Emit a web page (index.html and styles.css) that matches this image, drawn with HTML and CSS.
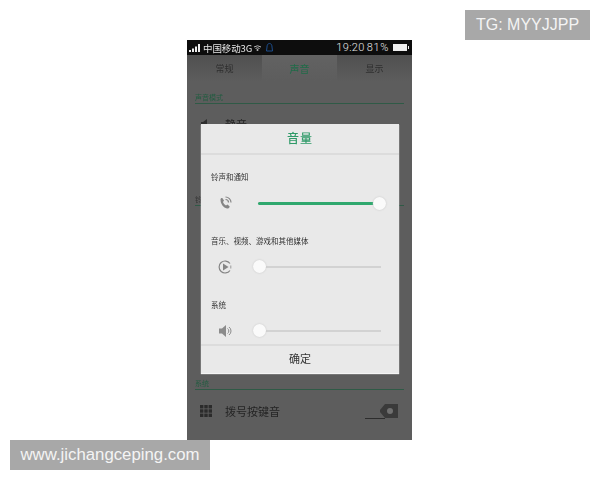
FILE: index.html
```html
<!DOCTYPE html>
<html lang="zh">
<head>
<meta charset="utf-8">
<title>音量</title>
<link rel="stylesheet" href="styles.css">
</head>
<body>
<div class="phone">
  <div class="status">
    <svg class="signal" width="12" height="8" viewBox="0 0 12 8"><rect x="0" y="6" width="2" height="2" fill="#eee"/><rect x="3" y="4.500" width="2" height="3.500" fill="#eee"/><rect x="6" y="2.500" width="2" height="5.500" fill="#eee"/><rect x="9" y="0" width="2" height="8" fill="#eee"/></svg>
    <span class="carrier">中国移动3G</span>
    <svg class="wifi" width="7" height="6" viewBox="0 0 7 6"><path d="M0 2 Q3.500 -0.500 7 2 M1.500 3.500 Q3.500 2 5.500 3.500" stroke="#bbb" stroke-width="1" fill="none"/><circle cx="3.500" cy="5" r="1" fill="#bbb"/></svg>
    <svg class="qq" width="7" height="9" viewBox="0 0 7 9"><path d="M3.500 .5C1.500 .5 1 2.500 1 4L.5 8H6.500L6 4C6 2.500 5.500 .5 3.500 .5Z" stroke="#1d4f8f" fill="none"/></svg>
    <span class="clock">19:20</span>
    <span class="percent">81%</span>
    <span class="battery"><span class="battery-cap"></span></span>
  </div>
  <div class="tabs">
    <div class="tab">常规</div>
    <div class="tab tab-active">声音</div>
    <div class="tab">显示</div>
  </div>
  <div class="content">
    <div class="section-title">声音模式</div>
    <div class="row row-mode">
      <svg class="row-icon" width="12" height="12" viewBox="0 0 12 12"><path d="M1 4H3L7 1V11L3 8H1Z" fill="#2e2e2e"/></svg>
      <span class="row-label">静音</span>
    </div>
    <div class="section-title section-mid">铃声</div>
    <div class="spacer"></div>
    <div class="section-title">系统</div>
    <div class="row row-dial">
      <svg class="row-icon" width="12" height="12" viewBox="0 0 12 12">
        <g fill="#2b2b2b"><rect width="3.400" height="3.400"/><rect x="4.300" width="3.400" height="3.400"/><rect x="8.600" width="3.400" height="3.400"/><rect y="4.300" width="3.400" height="3.400"/><rect x="4.300" y="4.300" width="3.400" height="3.400"/><rect x="8.600" y="4.300" width="3.400" height="3.400"/><rect y="8.600" width="3.400" height="3.400"/><rect x="4.300" y="8.600" width="3.400" height="3.400"/><rect x="8.600" y="8.600" width="3.400" height="3.400"/></g>
      </svg>
      <span class="row-label">拨号按键音</span>
      <svg class="toggle" width="33" height="16" viewBox="0 0 33 16"><path d="M0 15.500H20" stroke="#2d2d2d"/><path d="M15 7L20 1H33V15H20L15 9Z" fill="#3a3a3a"/><circle cx="25" cy="8" r="3" fill="#707070"/></svg>
    </div>
  </div>

  <div class="dialog">
    <div class="dialog-title">音量</div>
    <div class="volume-list">
      <div class="volume">
        <div class="volume-label">铃声和通知</div>
        <div class="volume-row">
          <svg class="volume-icon" width="14" height="14" viewBox="0 0 14 14"><path d="M2.500 3.500C2.500 2.300 3.800 1.700 4.500 2.300L6 4.500L5 6C5.500 7.500 6.500 8.800 8 9.500L9.500 8.500L11.700 10.500C11.700 11.700 10 12.800 9 12.500C5.500 11.700 2.500 8 2.500 3.500Z" fill="#858585"/><path d="M7.500 1A5.500 5.500 0 0 1 13 6.500M7.500 3.500A3 3 0 0 1 10.500 6.500" stroke="#858585" stroke-width="1.200" fill="none"/></svg>
          <div class="slider"><div class="slider-fill"></div><div class="thumb"></div></div>
        </div>
      </div>
      <div class="volume">
        <div class="volume-label">音乐、视频、游戏和其他媒体</div>
        <div class="volume-row">
          <svg class="volume-icon" width="14" height="14" viewBox="0 0 14 14"><path d="M12 3.500A6 6 0 1 0 12 10.500" stroke="#858585" stroke-width="1.200" fill="none"/><path d="M5 3.500L10.500 7L5 10.500Z" fill="#858585"/><path d="M12.800 5.500V8.500" stroke="#999"/></svg>
          <div class="slider"><div class="thumb thumb-start"></div></div>
        </div>
      </div>
      <div class="volume">
        <div class="volume-label">系统</div>
        <div class="volume-row">
          <svg class="volume-icon" width="14" height="14" viewBox="0 0 14 14"><path d="M1 4.500H4L8 1V13L4 9.500H1Z" fill="#8b8b8b"/><path d="M9.500 4.500A3 3 0 0 1 9.500 9.500M11 3A5 5 0 0 1 11 11" stroke="#8b8b8b" fill="none"/></svg>
          <div class="slider"><div class="thumb thumb-start"></div></div>
        </div>
      </div>
    </div>
    <div class="dialog-ok">确定</div>
  </div>
</div>
<div class="mark mark-tg">TG: MYYJJPP</div>
<div class="mark mark-site">www.jichangceping.com</div>
</body>
</html>
```
FILE: styles.css
```css
* { box-sizing: border-box; }
html, body { margin: 0; padding: 0; }
body {
  width: 600px;
  height: 480px;
  background: #fff;
  overflow: hidden;
  position: relative;
  font-family: "Noto Sans CJK SC", "Liberation Sans", sans-serif;
}
.phone {
  position: relative;
  width: 225px;
  height: 400px;
  margin: 40px 0 0 187px;
  background: #5d5d5d;
  display: flex;
  flex-direction: column;
}
.status {
  height: 15px;
  background: #0d0d0d;
  color: #e6e6e6;
  display: flex;
  align-items: center;
  padding: 0 5px 0 2px;
  white-space: nowrap;
}
.signal { margin-right: 2px; }
.carrier { font-size: 9.500px; width: 50px; letter-spacing: -0.1px; filter: blur(.3px); }
.wifi { margin-left: 1px; }
.qq { margin-left: 5px; }
.clock { margin-left: auto; font-family: Roboto, sans-serif; font-weight: 300; font-size: 11px; letter-spacing: .4px; }
.percent { margin-left: 2px; font-family: Roboto, sans-serif; font-weight: 300; font-size: 11px; letter-spacing: .6px; }
.battery {
  margin-left: 4px;
  width: 14px;
  height: 7px;
  background: #eee;
  position: relative;
}
.battery-cap {
  position: absolute;
  right: -2px;
  top: 2px;
  width: 1px;
  height: 3px;
  background: #eee;
}
.tabs {
  height: 26px;
  display: grid;
  grid-template-columns: 75px 75px 75px;
  background: linear-gradient(#505050, #5d5d5d);
  font-size: 9px;
  color: #2f2f2f;
}
.tab { display: flex; align-items: center; justify-content: center; filter: blur(.4px); }
.tab-active { background: linear-gradient(#626262, #5d5d5d); color: #1f6b48; font-size: 10px; }
.content {
  flex: 1;
  padding: 10px 8px 0;
  display: flex;
  flex-direction: column;
  color: #272727;
}
.section-title {
  font-size: 7px;
  line-height: 12px;
  height: 13px;
  flex: none;
  color: #235c41;
  border-bottom: 1px solid #2f5a46;
  filter: blur(.3px);
}
.row { display: flex; align-items: center; flex: none; }
.row-mode { height: 40px; padding-left: 5px; margin-bottom: 49px; }
.section-mid { color: #333; }
.spacer { height: 171px; flex: none; }
.row-dial { height: 42px; padding-left: 5px; }
.row-icon { margin-right: 13px; flex: none; filter: blur(.4px); }
.row-label { font-size: 11px; color: #242424; filter: blur(.4px); }
.toggle { margin-left: auto; margin-right: 6px; flex: none; filter: blur(.3px); }
.dialog {
  position: absolute;
  left: 14px;
  top: 84px;
  width: 198px;
  height: 249px;
  background: #e9e9e9;
  display: flex;
  flex-direction: column;
  box-shadow: 0 1px 1px #f5f5f5;
}
.dialog-title {
  height: 31px;
  flex: none;
  display: flex;
  align-items: center;
  justify-content: center;
  padding-bottom: 2px;
  color: #2f9a68;
  font-size: 12px;
  font-weight: 500;
  letter-spacing: 1px;
  border-bottom: 2px solid #dcdcdc;
  filter: blur(.3px);
}
.volume-list { flex: 1; padding-top: 16px; display: flex; flex-direction: column; gap: 21px; }
.volume { height: 43px; flex: none; }
.volume-label { font-size: 7.500px; line-height: 12px; color: #333; padding-left: 10px; filter: blur(.25px); }
.volume-row {
  height: 16px;
  margin-top: 12px;
  display: flex;
  align-items: center;
  padding-left: 17px;
}
.volume-icon { flex: none; filter: blur(.3px); }
.slider {
  margin-left: 26px;
  width: 123px;
  height: 2px;
  background: #d2d2d2;
  position: relative;
}
.slider-fill {
  position: absolute;
  left: 0;
  top: 0;
  width: 122px;
  height: 3px;
  background: #2fa86e;
  border-radius: 2px;
}
.thumb {
  position: absolute;
  right: -5px;
  top: -5px;
  width: 13px;
  height: 13px;
  border-radius: 50%;
  background: #fafafa;
  box-shadow: 0 0 2px #c4c4c4;
}
.thumb-start { left: -5px; right: auto; top: -6px; }
.dialog-ok {
  height: 29px;
  flex: none;
  border-top: 2px solid #dcdcdc;
  display: flex;
  align-items: center;
  justify-content: center;
  padding-bottom: 3px;
  font-size: 11px;
  color: #333;
  filter: blur(.25px);
}
.mark {
  position: absolute;
  height: 30px;
  background: #a8a8a8;
  color: #f4f4f4;
  display: flex;
  align-items: center;
  justify-content: center;
  font-family: "Liberation Sans", sans-serif;
  font-size: 16px;
  white-space: nowrap;
}
.mark-tg { left: 465px; top: 10px; width: 125px; }
.mark-site { left: 10px; top: 440px; width: 200px; font-size: 16.800px; }
```
